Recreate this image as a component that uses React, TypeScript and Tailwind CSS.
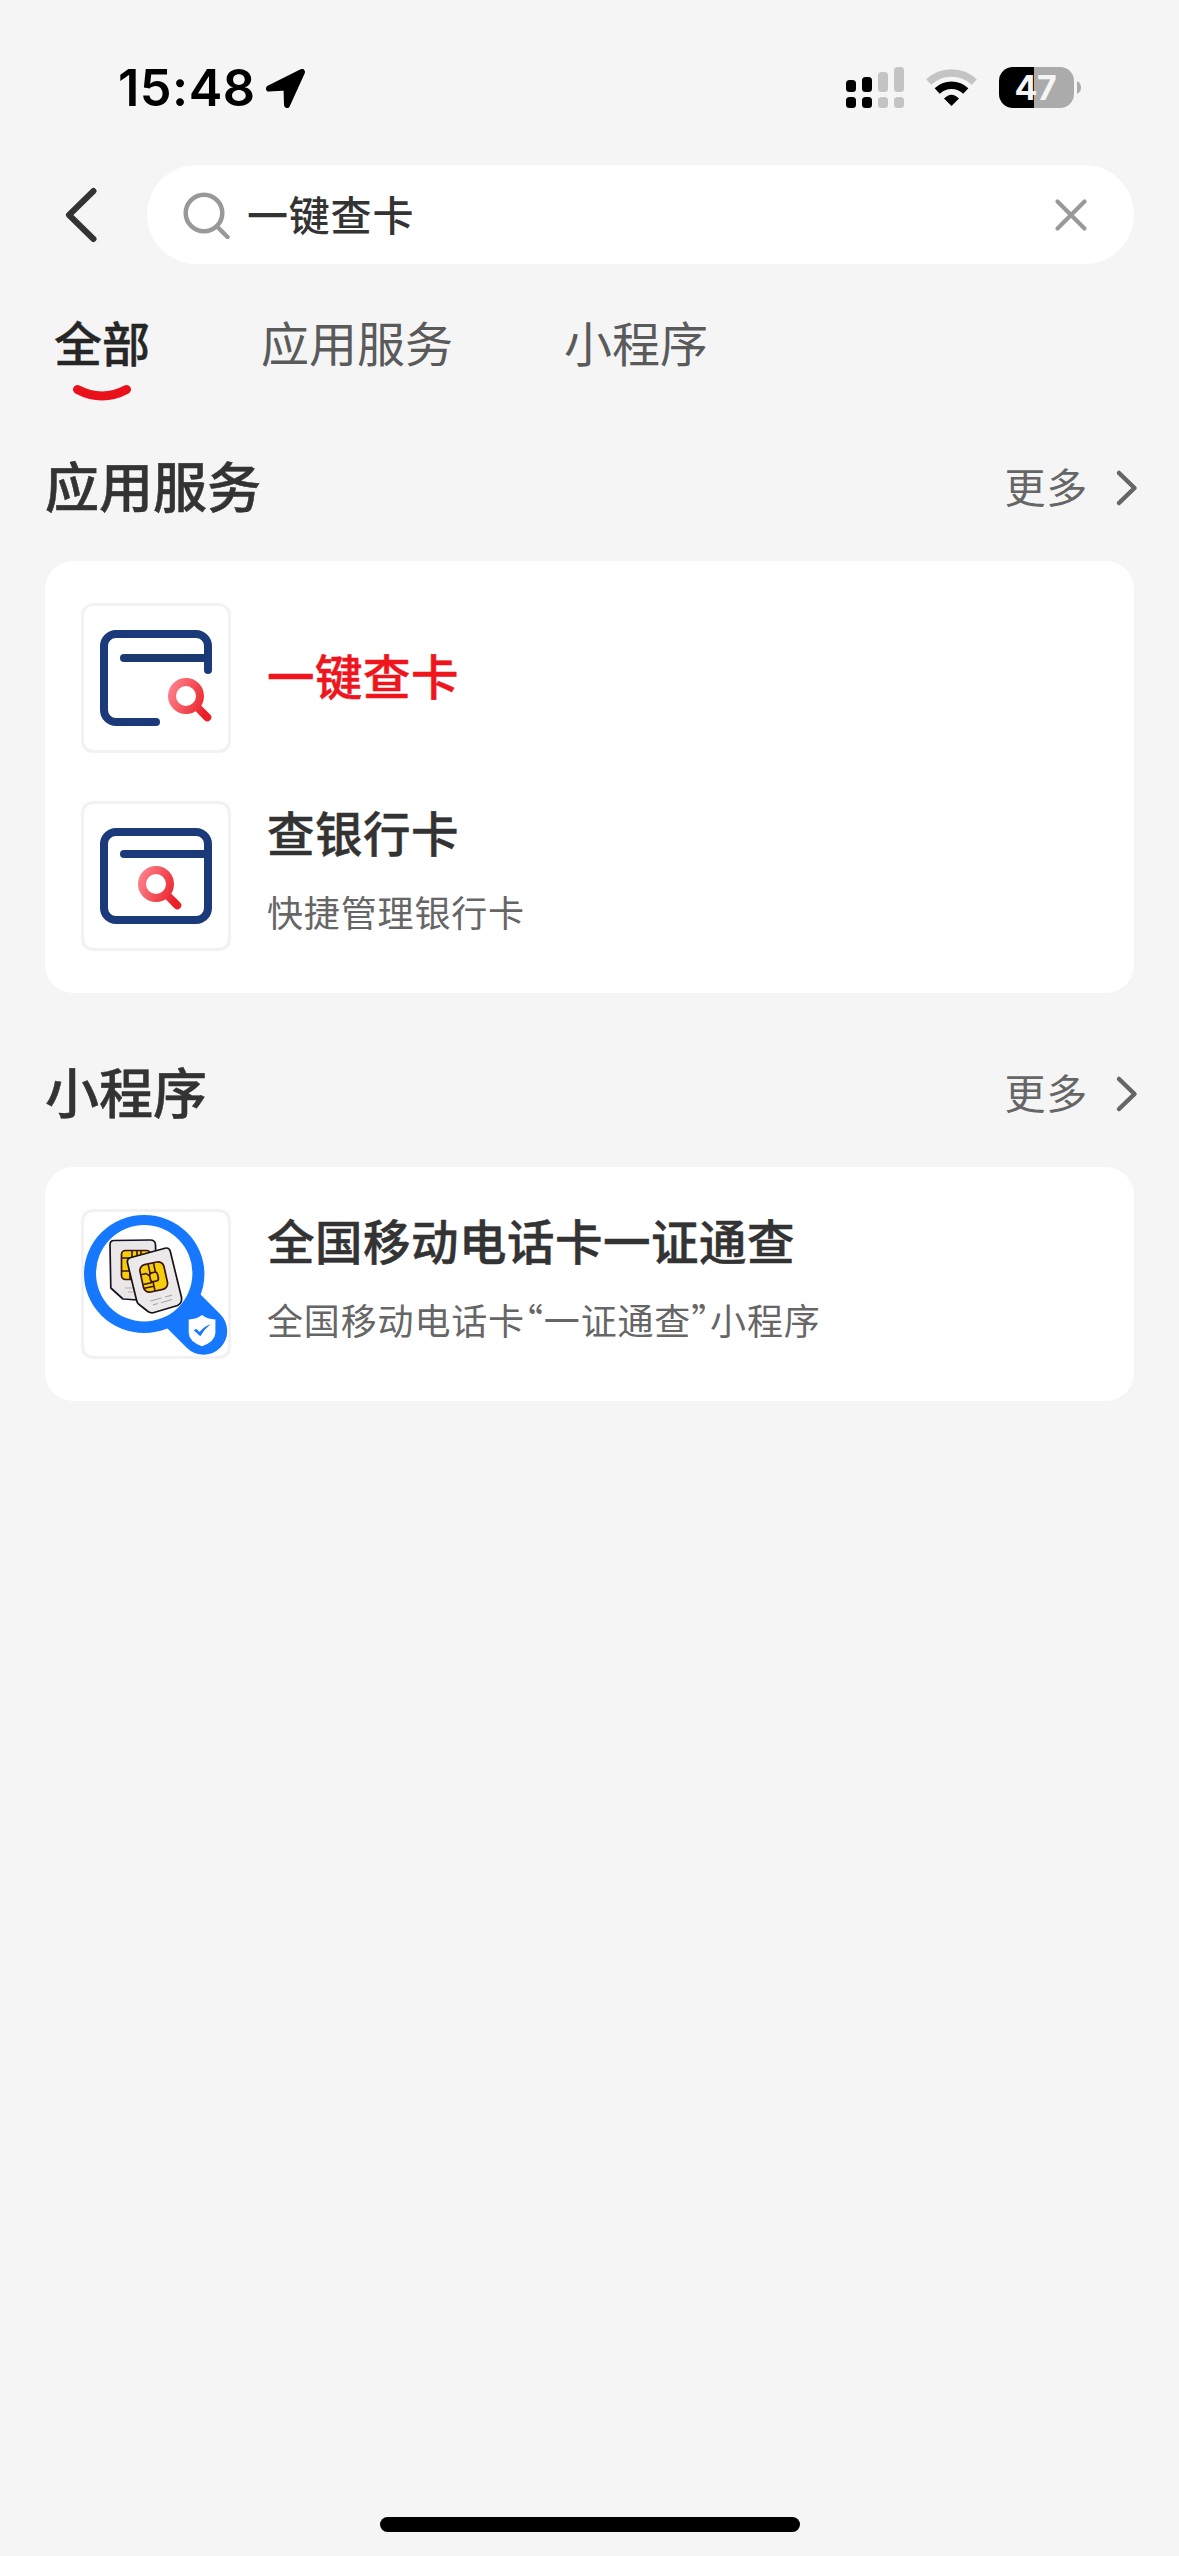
import type { ReactNode } from "react";
import { clsx } from "clsx";

type Result = {
  title: string;
  desc?: string;
  highlight?: boolean;
  icon: ReactNode;
};

function StatusBar() {
  return (
    <div className="flex h-[165px] items-start pt-[67px] pl-[118px] pr-[98px]">
      <div className="flex h-[42px] w-[148px] items-center whitespace-nowrap font-['Inter'] text-[50.5px] font-semibold leading-none tracking-[0.5px] text-black">15:48</div>
      <svg className="mt-[2px] h-[39px] w-[39px]" viewBox="0 0 39 39">
        <path d="M3 19.5 L36 3 L21 36 L20.5 18.5 Z" fill="#000" stroke="#000" strokeWidth="6" strokeLinejoin="round" />
      </svg>
      <div className="ml-auto flex h-[41px]">
        <svg className="h-[41px] w-[58px]" viewBox="0 0 58 41">
          <g fill="#000">
            <rect x="0" y="13" width="10" height="12" rx="3.5" />
            <rect x="16" y="10" width="10" height="15" rx="3.5" />
            <rect x="0" y="30" width="10" height="11" rx="3.5" />
            <rect x="16" y="30" width="10" height="11" rx="3.5" />
          </g>
          <g fill="#c4c4c4">
            <rect x="32" y="5" width="10" height="20" rx="3.5" />
            <rect x="48" y="0" width="10" height="25" rx="3.5" />
            <rect x="32" y="30" width="10" height="11" rx="3.5" />
            <rect x="48" y="30" width="10" height="11" rx="3.5" />
          </g>
        </svg>
        <svg className="ml-[22px] h-[41px] w-[51px]" viewBox="0 0 51 41">
          <g fill="none" strokeWidth="7.4">
            <path d="M2.7 15 A33.2 33.2 0 0 1 48.3 15" stroke="#c4c4c4" />
            <path d="M11.2 24 A20.6 20.6 0 0 1 39.8 24" stroke="#000" />
          </g>
          <path d="M18 31.5 Q25.5 23.8 33 31.5 L25.5 39 Z" fill="#000" />
        </svg>
        <div className="ml-[22px] flex h-[41px] w-[75px] items-center justify-center overflow-hidden rounded-[14px] bg-[linear-gradient(90deg,#000_46.5%,#ababab_46.5%)] pr-[2px] pt-[1px] font-['Inter'] text-[34px] font-bold leading-none tracking-[-0.3px] text-[#f5f5f5]">47</div>
        <svg className="ml-[3px] mt-[14px] h-[13px] w-[4px]" viewBox="0 0 4 13">
          <path d="M0 0 Q4 2 4 6.5 Q4 11 0 13 Z" fill="#ababab" />
        </svg>
      </div>
    </div>
  );
}

function SearchBar() {
  return (
    <div className="flex h-[99px] items-center pr-[45px]">
      <button className="flex w-[147px] pl-[64px]">
        <svg className="h-[56px] w-[34px]" viewBox="0 0 34 56">
          <path d="M29.500 4 L5 28 L29.500 52" fill="none" stroke="#333" strokeWidth="6" strokeLinecap="round" strokeLinejoin="round" />
        </svg>
      </button>
      <div className="flex h-full flex-1 items-center rounded-[49.5px] bg-white pl-[36px] pr-[46px]">
        <svg className="h-[48px] w-[48px]" viewBox="0 0 48 48" fill="none" stroke="#999" strokeWidth="4.500" strokeLinecap="round">
          <circle cx="21" cy="22" r="18.300" />
          <path d="M34 35.500 L44.500 46" />
        </svg>
        <span className="ml-[16px] -mt-[4px] text-[41px] font-medium leading-[60px] tracking-[0.8px] text-[#333]">一键查卡</span>
        <svg className="ml-auto h-[34px] w-[34px]" viewBox="0 0 34 34">
          <path d="M3.500 3.500 L30.500 30.500 M30.500 3.500 L3.500 30.500" stroke="#999" strokeWidth="4.200" strokeLinecap="round" />
        </svg>
      </div>
    </div>
  );
}

function Tabs() {
  const tabs = ["全部", "应用服务", "小程序"];
  return (
    <div className="flex h-[190px] gap-[111px] pl-[54px] pt-[47px]">
      {tabs.map((tab, i) => (
        <div key={tab} className="flex flex-col items-center">
          <span className={clsx("text-[48px] leading-[60px]", i === 0 ? "font-medium text-[#262626] [-webkit-text-stroke:0.4px]" : "font-normal text-[#5a5a5a]")}>{tab}</span>
          {i === 0 && (
            <svg className="mt-[13px] h-[18px] w-[58px]" viewBox="0 0 58 18">
              <path d="M4.500 5.500 Q29 18.500 53.500 5.500" fill="none" stroke="#e9121b" strokeWidth="9" strokeLinecap="round" />
            </svg>
          )}
        </div>
      ))}
    </div>
  );
}

function Magnifier({ id, x, y }: { id: string; x: number; y: number }) {
  return (
    <g transform={`translate(${x} ${y})`}>
      <linearGradient id={id} gradientUnits="userSpaceOnUse" x1="-17" y1="-6" x2="22" y2="10">
        <stop offset="0" stopColor="#fd7f8a" />
        <stop offset="1" stopColor="#ea2027" />
      </linearGradient>
      <g fill="none" stroke={`url(#${id})`} strokeWidth="8">
        <circle r="14" />
        <path d="M10.500 10.500 L21.300 21.300" strokeLinecap="round" />
      </g>
    </g>
  );
}

function QuickCheckIcon() {
  return (
    <svg className="h-full w-full" viewBox="0 0 144 144">
      <g transform="translate(-3 -3)">
        <g fill="none" stroke="#1b3a7a" strokeWidth="8" strokeLinecap="round">
          <path d="M43 55 H127" stroke="#193b72" />
          <path d="M75 119 H35 A12 12 0 0 1 23 107 V43 A12 12 0 0 1 35 31 H115 A12 12 0 0 1 127 43 V67" />
        </g>
        <Magnifier id="quick" x={105} y={93} />
      </g>
    </svg>
  );
}

function BankCardIcon() {
  return (
    <svg className="h-full w-full" viewBox="0 0 144 144">
      <g transform="translate(-3 -3)">
        <g fill="none" stroke="#1b3a7a" strokeWidth="8" strokeLinecap="round">
          <rect x="23" y="31" width="104" height="88" rx="12" />
          <path d="M43 53 H127" />
        </g>
        <Magnifier id="bank" x={75} y={83} />
      </g>
    </svg>
  );
}

function SimCardIcon() {
  return (
    <svg className="h-full w-full" viewBox="0 0 144 144">
      <g transform="translate(-3 -3)" strokeLinejoin="round">
        <path d="M85 84.500 L122.500 122" stroke="#1677ff" strokeWidth="47.500" strokeLinecap="round" />
        <ellipse cx="63.200" cy="65" rx="60.200" ry="59" fill="#1677ff" />
        <circle cx="63.200" cy="64.300" r="48.200" fill="#fff" />

        {/* back card */}
        <path d="M33 31.500 L69 31 Q74.500 31 74.500 36 L76 89 L57 91 L42 90 L29.800 79 L29 36 Q29 31.500 33 31.500 Z" fill="#ebe7e8" stroke="#171026" strokeWidth="1.700" />
        <rect x="40.500" y="41.500" width="29" height="29" rx="4" fill="#f6ce0c" stroke="#3b1414" strokeWidth="1.700" />
        <path d="M51 42 V49 H41 M56 42 V48 M60 42 V47 M41 62 H50 M49 49 V70" fill="none" stroke="#3b1414" strokeWidth="1.600" />
        <path d="M44 79 H52 M47 83 H54" stroke="#b3b1b1" strokeWidth="1" />

        {/* front card */}
        <path d="M50 48.500 L84 39.200 Q88 38.200 89.200 42 L100.400 88 Q101.500 94 96.500 96.500 L73 103.500 Q70 104.500 67 102.500 L57.500 95 Q56 93.500 55.500 91 L46.500 54 Q45.500 49.800 50 48.500 Z" fill="#ece9ea" stroke="#171214" strokeWidth="1.700" />
        <g transform="rotate(-12.500 72.800 68)" stroke="#3b1414" strokeWidth="1.700">
          <rect x="60.500" y="54" width="24.500" height="28" rx="6" fill="#f6ce0c" />
          <path d="M70 54 V64 M75.500 54 V64 M61 63 H66 L69 66 M61 73 H69 L71 71 M71 72 V82 M61 77 H71" fill="none" strokeWidth="1.600" />
          <rect x="69" y="63.500" width="8" height="9" rx="2.500" fill="#f6ce0c" />
        </g>
        <path d="M69.500 92 L80.500 89 M84 88 L91 86.200 M72 95.800 L77 94.500 M80 93.800 L91 90.500" stroke="#a9a7a7" strokeWidth="1.200" />

        {/* shield */}
        <path d="M121 106 Q126 110 134.400 110.500 V124 Q134 132.500 121 137.300 Q108 132.500 107.700 124 V110.500 Q116 110 121 106 Z" fill="#fff" />
        <path d="M112.500 121 L115.500 120 L118.500 123 Q123 117.500 129.500 115.300 Q123.500 120 119.300 127.200 Z" fill="#1677ff" />
      </g>
    </svg>
  );
}

function ResultRow({ item }: { item: Result }) {
  return (
    <div className="flex h-[150px]">
      <div className="h-[150px] w-[150px] shrink-0 overflow-hidden rounded-[12px] border-[3px] border-[#f2f2f2] bg-white">{item.icon}</div>
      <div className={clsx("ml-[36px] flex flex-col", item.desc ? "pt-[1px]" : "justify-center pb-[6px]")}>
        <span className={clsx("text-[47.5px] font-medium leading-[60px] tracking-[0.5px] [-webkit-text-stroke:0.5px]", item.highlight ? "text-[#ee151d]" : "text-[#333]")}>{item.title}</span>
        {item.desc && <span className="mt-[25px] text-[36px] leading-[48px] tracking-[0.85px] text-[#666] [font-feature-settings:'halt']">{item.desc}</span>}
      </div>
    </div>
  );
}

function Section({ title, items }: { title: string; items: Result[] }) {
  return (
    <section className="mb-[67px] px-[45px]">
      <div className="mb-[47px] flex h-[60px] items-center">
        <h2 className="mt-[2px] text-[54px] font-medium leading-[60px] text-[#333] [-webkit-text-stroke:0.5px]">{title}</h2>
        <span className="ml-auto mt-[2px] text-[41px] leading-[60px] tracking-[0.8px] text-[#666]">更多</span>
        <svg className="-mr-[5px] ml-[27px] mt-[7px] h-[38px] w-[24px]" viewBox="0 0 24 38">
          <path d="M4 4 L19.500 19 L4 34" fill="none" stroke="#666" strokeWidth="4.500" strokeLinecap="round" strokeLinejoin="round" />
        </svg>
      </div>
      <div className="flex flex-col gap-[48px] rounded-[28px] bg-white px-[36px] py-[42px]">
        {items.map((item) => <ResultRow key={item.title} item={item} />)}
      </div>
    </section>
  );
}

const services: Result[] = [
  { title: "一键查卡", highlight: true, icon: <QuickCheckIcon /> },
  { title: "查银行卡", desc: "快捷管理银行卡", icon: <BankCardIcon /> },
];

const miniPrograms: Result[] = [
  { title: "全国移动电话卡一证通查", desc: "全国移动电话卡“一证通查”小程序", icon: <SimCardIcon /> },
];

export default function App() {
  return (
    <div className="flex h-[2556px] w-[1179px] flex-col overflow-hidden bg-[#f5f5f5] font-['Noto_Sans_CJK_SC',sans-serif]">
      <StatusBar />
      <SearchBar />
      <Tabs />
      <Section title="应用服务" items={services} />
      <Section title="小程序" items={miniPrograms} />
      <div className="mx-auto mb-[24px] mt-auto h-[15px] w-[420px] rounded-full bg-black" />
    </div>
  );
}
